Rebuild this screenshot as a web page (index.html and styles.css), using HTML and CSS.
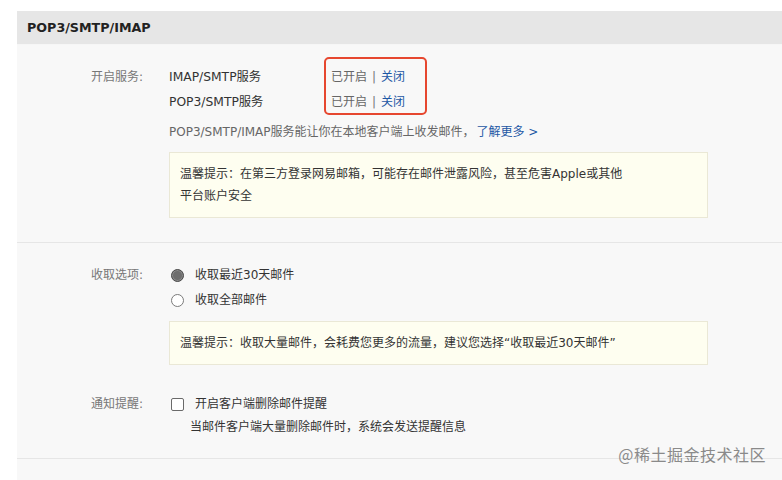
FILE: index.html
```html
<!DOCTYPE html>
<html lang="zh-CN">
<head>
<meta charset="utf-8">
<title>POP3/SMTP/IMAP</title>
<link rel="stylesheet" href="styles.css">
</head>
<body>
<div class="page">
  <div class="panel">
    <div class="panel-head">POP3/SMTP/IMAP</div>
    <div class="section">
      <div class="row">
        <div class="label">开启服务:</div>
        <div class="content">
          <div class="services">
            <div class="service-names">
              <div class="line">IMAP/SMTP服务</div>
              <div class="line">POP3/SMTP服务</div>
            </div>
            <div class="service-status">
              <div class="line">已开启<span class="sep">|</span><a class="link">关闭</a></div>
              <div class="line">已开启<span class="sep">|</span><a class="link">关闭</a></div>
            </div>
          </div>
          <div class="desc">POP3/SMTP/IMAP服务能让你在本地客户端上收发邮件，<a class="link more">了解更多 &gt;</a></div>
          <div class="tip">温馨提示：在第三方登录网易邮箱，可能存在邮件泄露风险，甚至危害Apple或其他<br>平台账户安全</div>
        </div>
      </div>
    </div>
    <div class="section section-2">
      <div class="row">
        <div class="label">收取选项:</div>
        <div class="content">
          <div class="line opt"><span class="radio checked"></span>收取最近30天邮件</div>
          <div class="line opt"><span class="radio"></span>收取全部邮件</div>
          <div class="tip tip-single">温馨提示：收取大量邮件，会耗费您更多的流量，建议您选择“收取最近30天邮件”</div>
        </div>
      </div>
      <div class="row row-notify">
        <div class="label">通知提醒:</div>
        <div class="content">
          <div class="line opt"><span class="checkbox"></span>开启客户端删除邮件提醒</div>
          <div class="line sub">当邮件客户端大量删除邮件时，系统会发送提醒信息</div>
        </div>
      </div>
    </div>
    <div class="panel-foot"></div>
  </div>
  <div class="watermark">@稀土掘金技术社区</div>
</div>
</body>
</html>
```

FILE: styles.css
```css
html, body {
  margin: 0;
  padding: 0;
  background: #ffffff;
}
body {
  font-family: "DejaVu Sans", "Noto Sans CJK SC", sans-serif;
  font-size: 12px;
  color: #333333;
  overflow: hidden;
}
.page {
  position: relative;
  width: 782px;
  height: 480px;
  padding: 11px 0 0 17px;
  box-sizing: border-box;
}
.panel {
  background: #f8f8f8;
}
.panel-head {
  height: 33px;
  line-height: 33px;
  padding-left: 10px;
  background: #e6e6e6;
  border-bottom: 1px solid #f6f6f6;
  font-weight: bold;
  font-size: 12.7px;
  color: #222222;
  font-family: "DejaVu Sans", sans-serif;
}
.section {
  padding: 20px 0 24px;
  border-bottom: 1px solid #e6e6e6;
}
.section-2 {
  padding: 20px 0 20px;
}
.row {
  display: flex;
}
.row-notify {
  margin-top: 27px;
}
.label {
  width: 126px;
  text-align: right;
  color: #777777;
  line-height: 25px;
  flex: none;
}
.content {
  margin-left: 26px;
  flex: 1;
}
.line {
  line-height: 25px;
  height: 25px;
  white-space: nowrap;
}
.services {
  display: flex;
}
.service-names {
  width: 162px;
  font-size: 12.3px;
}
.service-status {
  position: relative;
  color: #666666;
}
.service-status::after {
  content: "";
  position: absolute;
  left: -7px;
  top: -8px;
  width: 99px;
  height: 54px;
  border: 2px solid #e6472f;
  border-radius: 5px;
}
.sep {
  color: #777777;
  margin: 0 5px;
}
.link {
  color: #1d57a5;
  text-decoration: none;
}
.desc {
  color: #666666;
  line-height: 25px;
  margin-top: 5px;
  white-space: nowrap;
}
.more {
  margin-left: 2px;
}
.tip {
  margin-top: 7px;
  width: 517px;
  padding: 10px 10px;
  line-height: 22px;
  background: #fefef0;
  border: 1px solid #eae8d6;
  color: #333333;
  white-space: nowrap;
}
.tip-single {
  margin-top: 8px;
}
.opt {
  display: flex;
  align-items: center;
}
.radio {
  width: 11px;
  height: 11px;
  border: 1px solid #7a7a7a;
  border-radius: 50%;
  background: #ffffff;
  margin: 0 11px 0 2px;
  flex: none;
  box-sizing: content-box;
}
.radio.checked {
  background: #6e6e6e;
  border-color: #4a4a4a;
  box-shadow: inset 0 0 0 1px #8a8a8a;
}
.checkbox {
  width: 11px;
  height: 11px;
  border: 1px solid #6a6a6a;
  border-radius: 2px;
  background: #ffffff;
  margin: 0 11px 0 2px;
  flex: none;
}
.sub {
  padding-left: 21px;
  line-height: 21px;
  height: 21px;
  margin-top: 0;
}
.panel-foot {
  height: 30px;
  background: #f8f8f8;
}
.watermark {
  position: absolute;
  right: 16px;
  bottom: 14px;
  font-size: 16px;
  color: #8a8a8a;
  font-family: "Noto Sans CJK SC", sans-serif;
  letter-spacing: 0.5px;
}
```
